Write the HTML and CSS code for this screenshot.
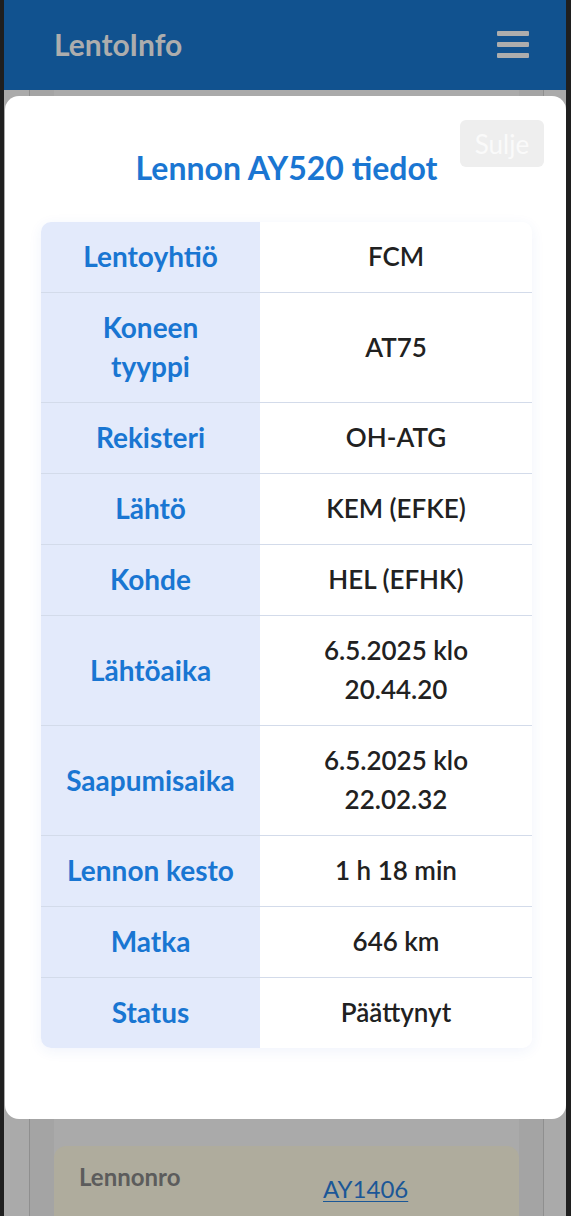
FILE: index.html
```html
<!DOCTYPE html>
<html lang="fi">
<head>
<meta charset="utf-8">
<title>LentoInfo</title>
<link rel="stylesheet" href="styles.css">
</head>
<body>
<div class="app">
  <header class="topbar">
    <span class="brand">LentoInfo</span>
    <button class="menu-btn" aria-label="Valikko"><span></span><span></span><span></span></button>
  </header>
  <main class="page">
    <div class="container">
      <div class="column">
        <div class="flight-card">
          <div class="fc-row">
            <span class="fc-label">Lennonro</span>
            <a class="fc-link" href="#">AY1406</a>
          </div>
        </div>
      </div>
    </div>
  </main>
</div>

<div class="modal" role="dialog">
  <button class="close-btn">Sulje</button>
  <h2 class="modal-title">Lennon AY520 tiedot</h2>
  <div class="details">
    <table class="details-table">
      <tr><th>Lentoyhtiö</th><td>FCM</td></tr>
      <tr><th>Koneen tyyppi</th><td>AT75</td></tr>
      <tr><th>Rekisteri</th><td>OH-ATG</td></tr>
      <tr><th>Lähtö</th><td>KEM (EFKE)</td></tr>
      <tr><th>Kohde</th><td>HEL (EFHK)</td></tr>
      <tr><th>Lähtöaika</th><td>6.5.2025 klo 20.44.20</td></tr>
      <tr><th>Saapumisaika</th><td>6.5.2025 klo 22.02.32</td></tr>
      <tr><th>Lennon kesto</th><td>1 h 18 min</td></tr>
      <tr><th>Matka</th><td>646 km</td></tr>
      <tr><th>Status</th><td>Päättynyt</td></tr>
    </table>
  </div>
</div>
</body>
</html>
```

FILE: styles.css
```css
* { box-sizing: border-box; }

html, body {
  margin: 0;
  padding: 0;
}

body {
  background: #1f1f1f;
  font-family: Lato, "Noto Sans", sans-serif;
  height: 1216px;
  overflow: hidden;
}

.app {
  margin: 0 5px 0 4px;
  height: 1216px;
  background: #aaaaaa;
  overflow: hidden;
}

.topbar {
  height: 90px;
  background: #11528f;
  display: flex;
  align-items: center;
  justify-content: space-between;
  padding: 0 37px 0 50px;
}

.brand {
  font-size: 30px;
  font-weight: 700;
  color: #adadad;
  line-height: 40px;
  margin-top: -2px;
}

.menu-btn {
  border: 0;
  background: transparent;
  padding: 0;
  width: 32px;
  display: flex;
  flex-direction: column;
  gap: 6px;
  margin-top: -1px;
}

.menu-btn span {
  display: block;
  height: 5px;
  border-radius: 1px;
  background: #adadad;
}

.page {
  height: 1126px;
}

.container {
  margin-left: 25px;
  width: 515px;
  height: 100%;
  border-left: 1px solid #8f8f8f;
  border-right: 1px solid #8f8f8f;
  background: #a4a4a4;
  padding: 0 24px;
}

.column {
  height: 100%;
  background: #aaaaaa;
  padding-top: 1056px;
}

.flight-card {
  background: #afac9d;
  border-radius: 12px 12px 0 0;
  padding: 14px 25px;
  height: 200px;
}

.fc-row {
  display: grid;
  grid-template-columns: 244px auto;
  align-items: start;
}

.fc-label {
  font-size: 24px;
  font-weight: 700;
  color: #5c5c5c;
  line-height: 34px;
}

.fc-link {
  font-size: 24px;
  color: #1b5797;
  line-height: 34px;
  padding-top: 12px;
  text-decoration: underline;
  text-underline-offset: 3px;
  text-decoration-thickness: 1px;
}

.modal {
  position: fixed;
  left: 5px;
  top: 96px;
  width: 561px;
  background: #ffffff;
  border-radius: 14px;
  padding: 52px 34px 71px 36px;
}

.close-btn {
  position: absolute;
  top: 24px;
  right: 22px;
  width: 84px;
  height: 47px;
  border: 0;
  border-radius: 6px;
  background: #eeeeee;
  color: #fafafa;
  font-family: Lato, "Noto Sans", sans-serif;
  font-size: 26px;
  padding: 0;
}

.modal-title {
  margin: 0 0 34px;
  text-align: center;
  font-size: 32px;
  line-height: 40px;
  font-weight: 700;
  color: #1a76d2;
}

.details {
  border-radius: 10px;
  overflow: hidden;
  box-shadow: 0 3px 14px rgba(40, 90, 200, 0.07);
}

.details-table {
  width: 100%;
  border-collapse: collapse;
  table-layout: fixed;
}

.details-table th,
.details-table td {
  padding: 15px 22px 16px;
  line-height: 39px;
  text-align: center;
  vertical-align: middle;
  border-top: 1px solid #d3dbea;
}

.details-table tr:first-child th,
.details-table tr:first-child td {
  border-top: 0;
}

.details-table th {
  width: 219px;
  background: #e3eafb;
  color: #1976d2;
  font-size: 28px;
  font-weight: 700;
}

.details-table td {
  background: #ffffff;
  color: #212121;
  font-size: 26px;
  font-weight: 600;
}
```
